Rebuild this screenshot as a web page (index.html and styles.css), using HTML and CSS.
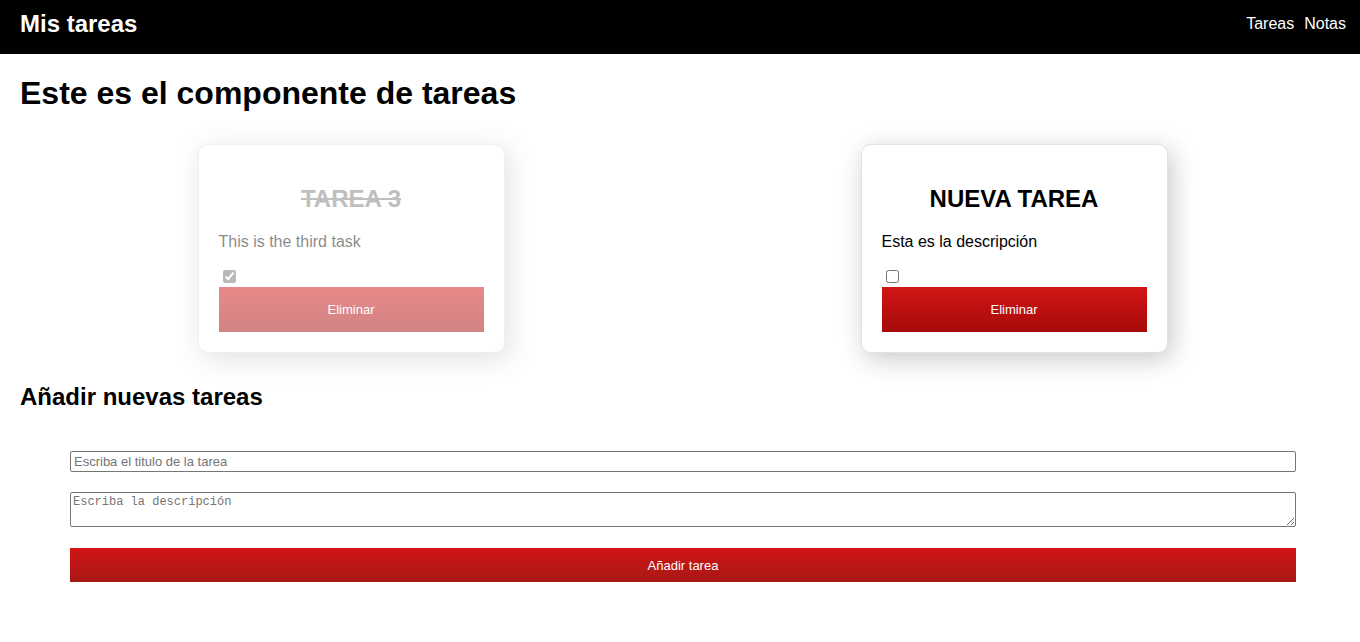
FILE: index.html
```html
<!DOCTYPE html>
<html lang="es">
<head>
<meta charset="utf-8">
<title>Mis tareas</title>
<link rel="stylesheet" href="styles.css">
</head>
<body>
<header class="topbar">
  <div class="brand">Mis tareas</div>
  <nav class="nav">
    <a href="#" class="nav-link">Tareas</a>
    <a href="#" class="nav-link">Notas</a>
  </nav>
</header>
<main class="main">
  <h1 class="page-title">Este es el componente de tareas</h1>
  <section class="cards">
    <div class="cell">
      <article class="card card-done">
        <h2 class="card-title">TAREA 3</h2>
        <p class="card-desc">This is the third task</p>
        <input type="checkbox" class="card-check" checked>
        <button class="btn">Eliminar</button>
      </article>
    </div>
    <div class="cell">
      <article class="card">
        <h2 class="card-title">NUEVA TAREA</h2>
        <p class="card-desc">Esta es la descripción</p>
        <input type="checkbox" class="card-check">
        <button class="btn">Eliminar</button>
      </article>
    </div>
  </section>
  <h2 class="section-title">Añadir nuevas tareas</h2>
  <form class="task-form">
    <input type="text" class="field" placeholder="Escriba el titulo de la tarea">
    <textarea class="area" rows="2" placeholder="Escriba la descripción"></textarea>
    <button type="button" class="btn btn-add">Añadir tarea</button>
  </form>
</main>
</body>
</html>
```

FILE: styles.css
```css
* { box-sizing: border-box; }
html, body { margin: 0; padding: 0; }
body {
  font-family: "Liberation Sans", Arial, sans-serif;
  color: #000;
  background: #fff;
}
.topbar {
  height: 54px;
  background: #000;
  color: #fff;
  display: flex;
  align-items: center;
  justify-content: space-between;
  padding: 0 14px 7px 20px;
}
.brand {
  font-size: 24px;
  font-weight: bold;
}
.nav {
  display: flex;
  gap: 10px;
  font-size: 16px;
}
.nav-link {
  color: #fff;
  text-decoration: none;
}
.main {
  padding: 0 14px 0 20px;
}
.page-title {
  font-size: 32px;
  font-weight: bold;
  margin: 21px 0 21px;
}
.cards {
  display: grid;
  grid-template-columns: 1fr 1fr;
  padding: 11px 0 0;
}
.cell {
  display: flex;
  justify-content: center;
  padding-right: 1px;
}
.card {
  width: 307px;
  background: #fff;
  border: 1px solid #e2e2e2;
  border-radius: 10px;
  padding: 0 20px 20px;
  box-shadow: 4px 6px 26px rgba(0, 0, 0, 0.22);
}
.card-done {
  opacity: 0.5;
}
.card-title {
  font-size: 24px;
  font-weight: bold;
  text-align: center;
  margin: 20px 0 20px;
  padding-top: 20px;
  line-height: 28px;
}
.card-done .card-title {
  color: #808080;
  text-decoration: line-through;
}
.card-desc {
  font-size: 16px;
  margin: 0 0 19px;
  line-height: 18px;
}
.card-done .card-desc {
  color: #141414;
}
.card-check {
  display: block;
  width: 13px;
  height: 13px;
  margin: 3px 3px 4px 4px;
}
.card-done .card-check {
  accent-color: #767676;
}
.btn {
  display: block;
  width: 100%;
  height: 45px;
  border: none;
  color: #fff;
  font-family: "Liberation Sans", Arial, sans-serif;
  font-size: 13px;
  background: linear-gradient(#d21515, #a60a0a);
  cursor: pointer;
}
.section-title {
  font-size: 24px;
  font-weight: bold;
  margin: 30px 0 0;
  line-height: 28px;
}
.task-form {
  display: flex;
  flex-direction: column;
  gap: 20px;
  margin: 40px 50px 0;
}
.field {
  height: 21px;
  border: 1px solid #767676;
  border-radius: 2px;
  padding: 1px 3px;
  font-family: "Liberation Sans", Arial, sans-serif;
  font-size: 13px;
}
.area {
  height: 35px;
  border: 1px solid #767676;
  border-radius: 2px;
  padding: 2px;
  font-family: "Liberation Mono", monospace;
  font-size: 12px;
  margin-bottom: 1px;
}
.field::placeholder, .area::placeholder { color: #757575; }
.btn-add {
  height: 34px;
  background: linear-gradient(#d01515, #a91717);
}
```
